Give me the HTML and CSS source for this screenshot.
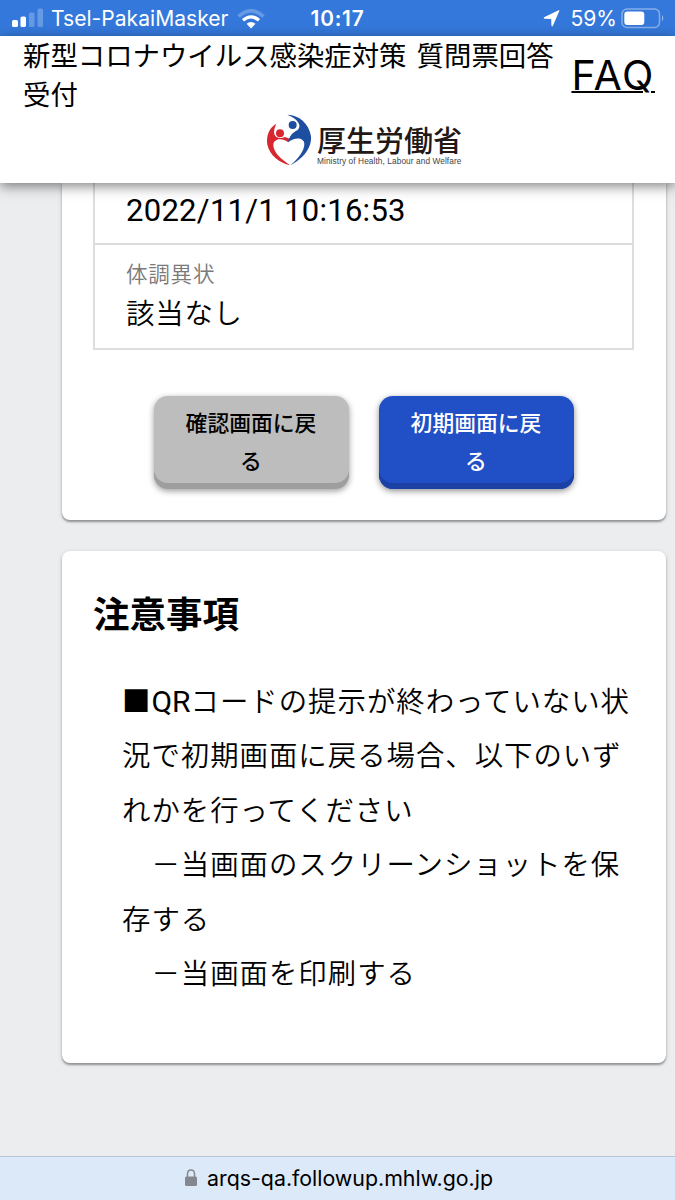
FILE: index.html
```
<!DOCTYPE html>
<html lang="ja">
<head>
  <meta charset="UTF-8">
  <meta name="viewport" content="width=device-width, initial-scale=1.0">
  <title>質問票回答受付</title>
  <link rel="stylesheet" href="styles.css">
</head>
<body>

  <div class="status-bar">
    <div class="status-left">
      <svg class="signal" width="32" height="20" viewBox="0 0 32 20" fill="#fff">
        <rect x="0" y="12" width="6" height="7" rx="1.6"/>
        <rect x="8.5" y="8.5" width="5.5" height="10.5" rx="1.6"/>
        <rect x="17" y="4.5" width="5.5" height="14.5" rx="1.6" opacity=".25"/>
        <rect x="25.5" y="0.5" width="5.5" height="18.5" rx="1.6" opacity=".25"/>
      </svg>
      <span class="carrier">Tsel-PakaiMasker</span>
      <svg class="wifi" width="28" height="20" viewBox="0 0 28 20" fill="none" stroke="#fff">
        <path d="M1.5 7.5 Q14 -4 26.5 7.5" stroke-width="3.6" opacity=".25"/>
        <path d="M6 11.3 Q14 4.5 22 11.3" stroke-width="3.3"/>
        <path d="M9.5 14.8 Q14 11 18.5 14.8 L14 19.5 Z" fill="#fff" stroke="none"/>
      </svg>
    </div>
    <div class="time">10:17</div>
    <div class="status-right">
      <svg width="17" height="17" viewBox="0 0 17 17" fill="#fff">
        <path d="M16.4 .8 L9.8 16 Q8.8 17 8.4 15.6 L8.2 8.9 L1.4 8.7 Q0 8.2 1.1 7.3 L15.6 .3 Q16.6 0 16.4 .8 Z"/>
      </svg>
      <span class="percent">59%</span>
      <svg width="44" height="21" viewBox="0 0 44 21">
        <rect x="1" y="1" width="37.5" height="18.5" rx="5" fill="none" stroke="#fff" stroke-width="1.5" opacity=".4"/>
        <rect x="3.3" y="3.5" width="20" height="13.5" rx="3" fill="#fff"/>
        <path d="M41 7 Q43.5 10 41 13.5 Z" fill="#fff" opacity=".5"/>
      </svg>
    </div>
  </div>

  <header class="header">
    <div class="header-top">
      <h1 class="title">新型コロナウイルス感染症対策 質問票回答<br>受付</h1>
      <a href="#" class="faq">FAQ</a>
    </div>
    <div class="logo">
      <svg width="46" height="52" viewBox="49 27 138 156">
        <path fill="#d7282f" d="M80 56 C58 68 49 92 53 119 C60 150 88 173 122 181 C94 163 72 143 71 121 C70 103 94 95 116 112 L120 101 L106 96 Q92 102 80 96 Q66 84 80 56 Z"/>
        <circle cx="91" cy="85" r="12" fill="#d7282f"/>
        <path fill="#1e4e9f" d="M113 29 C148 30 178 55 184 94 C187 133 154 165 122 181 C147 160 164 137 164 117 C164 97 135 95 115 112 C118 96 128 82 144 75 C158 62 145 42 113 29 Z"/>
        <circle cx="129" cy="60" r="12" fill="#1e4e9f"/>
      </svg>
      <div class="logo-text">
        <span class="logo-ja">厚生労働省</span>
        <span class="logo-en">Ministry of Health, Labour and Welfare</span>
      </div>
    </div>
  </header>

  <main class="content">
    <section class="card result-card">
      <div class="answers">
        <div class="answer answer-date">
          <p class="value date">2022/11/1 10:16:53</p>
        </div>
        <div class="answer">
          <p class="label">体調異状</p>
          <p class="value">該当なし</p>
        </div>
      </div>
      <div class="buttons">
        <button class="btn btn-back">確認画面に戻<br>る</button>
        <button class="btn btn-home">初期画面に戻<br>る</button>
      </div>
    </section>

    <section class="card notice-card">
      <h2>注意事項</h2>
      <p class="notice"><span class="square">■</span><span class="latin">QR</span>コードの提示が終わっていない状<br>況で初期画面に戻る場合、以下のいず<br>れかを行ってください<br>　－当画面のスクリーンショットを保<br>存する<br>　－当画面を印刷する</p>
    </section>
  </main>

  <footer class="url-bar">
    <svg width="12" height="18" viewBox="0 0 12 18">
      <path d="M2.5 8 V5 Q2.5 1 6 1 Q9.5 1 9.5 5 V8" fill="none" stroke="#85878f" stroke-width="1.5"/>
      <rect x="0" y="7.5" width="12" height="9.5" rx="1.5" fill="#85878f"/>
    </svg>
    <span>arqs-qa.followup.mhlw.go.jp</span>
  </footer>

</body>
</html>
```
FILE: styles.css
```
* {
  box-sizing: border-box;
}

body {
  display: flex;
  flex-direction: column;
  height: 1200px;
  margin: 0;
  overflow: hidden;
  background-color: #ebedef;
  color: #000;
  font-family: Roboto, "Noto Sans CJK JP", sans-serif;
}

h1, h2, p {
  margin: 0;
  font-weight: 400;
}

/* status bar */
.status-bar {
  display: grid;
  grid-template-columns: 1fr auto 1fr;
  align-items: center;
  flex: none;
  height: 36px;
  padding: 1px 10px 0 12px;
  background-color: #3478db;
  color: #fff;
  font-family: Inter, sans-serif;
  font-size: 21.1px;
  white-space: nowrap;
}

.status-left,
.status-right {
  display: flex;
  align-items: center;
}

.status-right {
  justify-content: flex-end;
}

.signal {
  margin-top: -1px;
}

.carrier {
  margin: 0 8px 0 7px;
}

.time {
  padding-right: 2px;
  font-size: 20.8px;
  font-weight: 600;
  letter-spacing: 0.8px;
}

.percent {
  margin: 0 4px 0 10px;
}

/* header */
.header {
  position: relative;
  z-index: 1;
  flex: none;
  height: 147px;
  padding: 0 20px 0 23px;
  background-color: #fff;
  box-shadow: 0 3px 12px rgba(0, 0, 0, 0.5);
}

.header-top {
  display: flex;
  justify-content: space-between;
  height: 78px;
}

.title {
  margin-top: -1px;
  font-family: "Noto Sans CJK JP", sans-serif;
  font-size: 27.4px;
  line-height: 38.5px;
  white-space: nowrap;
  word-spacing: 4px;
}

.faq {
  margin-top: 14px;
  color: #000;
  font-family: Inter, sans-serif;
  font-size: 41px;
  letter-spacing: 1.6px;
  line-height: 50px;
  text-decoration-thickness: 2px;
}

.logo {
  display: flex;
  margin-left: 243px;
}

.logo-text {
  display: flex;
  flex-direction: column;
  margin-left: 5px;
  padding-top: 8px;
  white-space: nowrap;
}

.logo-ja {
  color: #231815;
  font-family: "Noto Sans CJK JP", sans-serif;
  font-size: 29px;
  font-weight: 500;
  line-height: 34px;
}

.logo-en {
  margin-top: 1px;
  color: #444;
  font-family: "Liberation Sans", sans-serif;
  font-size: 8.3px;
  letter-spacing: 0.08px;
  line-height: 9px;
}

/* cards */
.content {
  flex: 1;
  padding: 0 9px 0 62px;
  overflow: hidden;
}

.card {
  padding: 0 32px;
  border-radius: 8px;
  background-color: #fff;
  box-shadow: 0 2px 2px rgba(0, 0, 0, 0.32), 0 1px 5px rgba(0, 0, 0, 0.14);
}

.result-card {
  height: 337px;
  padding-left: 31px;
  border-radius: 0 0 8px 8px;
}

.answers {
  border: 2px solid #ddd;
  border-top: none;
}

.answer {
  height: 103px;
  padding: 14px 31px 0;
}

.answer-date {
  height: 62px;
  padding-top: 7px;
  border-bottom: 2px solid #ddd;
}

.label {
  color: #7a7a7a;
  font-size: 21.6px;
  font-weight: 350;
  letter-spacing: 0.7px;
  line-height: 32px;
}

.value {
  margin-top: 2px;
  font-size: 28.4px;
  font-weight: 350;
  letter-spacing: 0.8px;
  line-height: 44px;
}

.date {
  margin-top: 0;
  font-size: 31px;
  font-weight: 400;
  letter-spacing: 0.28px;
  line-height: 41px;
}

.buttons {
  display: flex;
  justify-content: center;
  gap: 30px;
  margin-top: 46px;
}

.btn {
  width: 195px;
  height: 93px;
  padding: 0 0 3px;
  border: none;
  border-radius: 14px;
  font-family: "Noto Sans CJK JP", sans-serif;
  font-size: 21.8px;
  font-weight: 500;
  line-height: 38.5px;
}

.btn-back {
  background-color: #bdbdbd;
  box-shadow: inset 0 -6px 0 #9e9e9e, 0 2px 6px rgba(0, 0, 0, 0.4);
  color: #000;
}

.btn-home {
  background-color: #214fc6;
  box-shadow: inset 0 -6px 0 #1b41a5, 0 2px 6px rgba(0, 0, 0, 0.45);
  color: #fff;
}

.notice-card {
  height: 512px;
  margin-top: 31px;
  padding: 38px 31px 0;
}

.notice-card h2 {
  font-size: 36.5px;
  font-weight: 700;
  line-height: 54px;
}

.notice {
  margin-top: 32px;
  padding-left: 29px;
  font-size: 28.4px;
  font-weight: 350;
  letter-spacing: 1px;
  line-height: 54.4px;
  white-space: nowrap;
}

.latin {
  font-size: 30px;
  font-weight: 400;
  letter-spacing: 0;
}

/* browser address bar */
.url-bar {
  display: flex;
  justify-content: center;
  align-items: center;
  gap: 10px;
  flex: none;
  height: 44px;
  padding: 0 0 2px 3px;
  border-top: 1px solid #b5c5d9;
  background-color: #dce9f8;
  font-family: Inter, sans-serif;
  font-size: 21.35px;
}
```
